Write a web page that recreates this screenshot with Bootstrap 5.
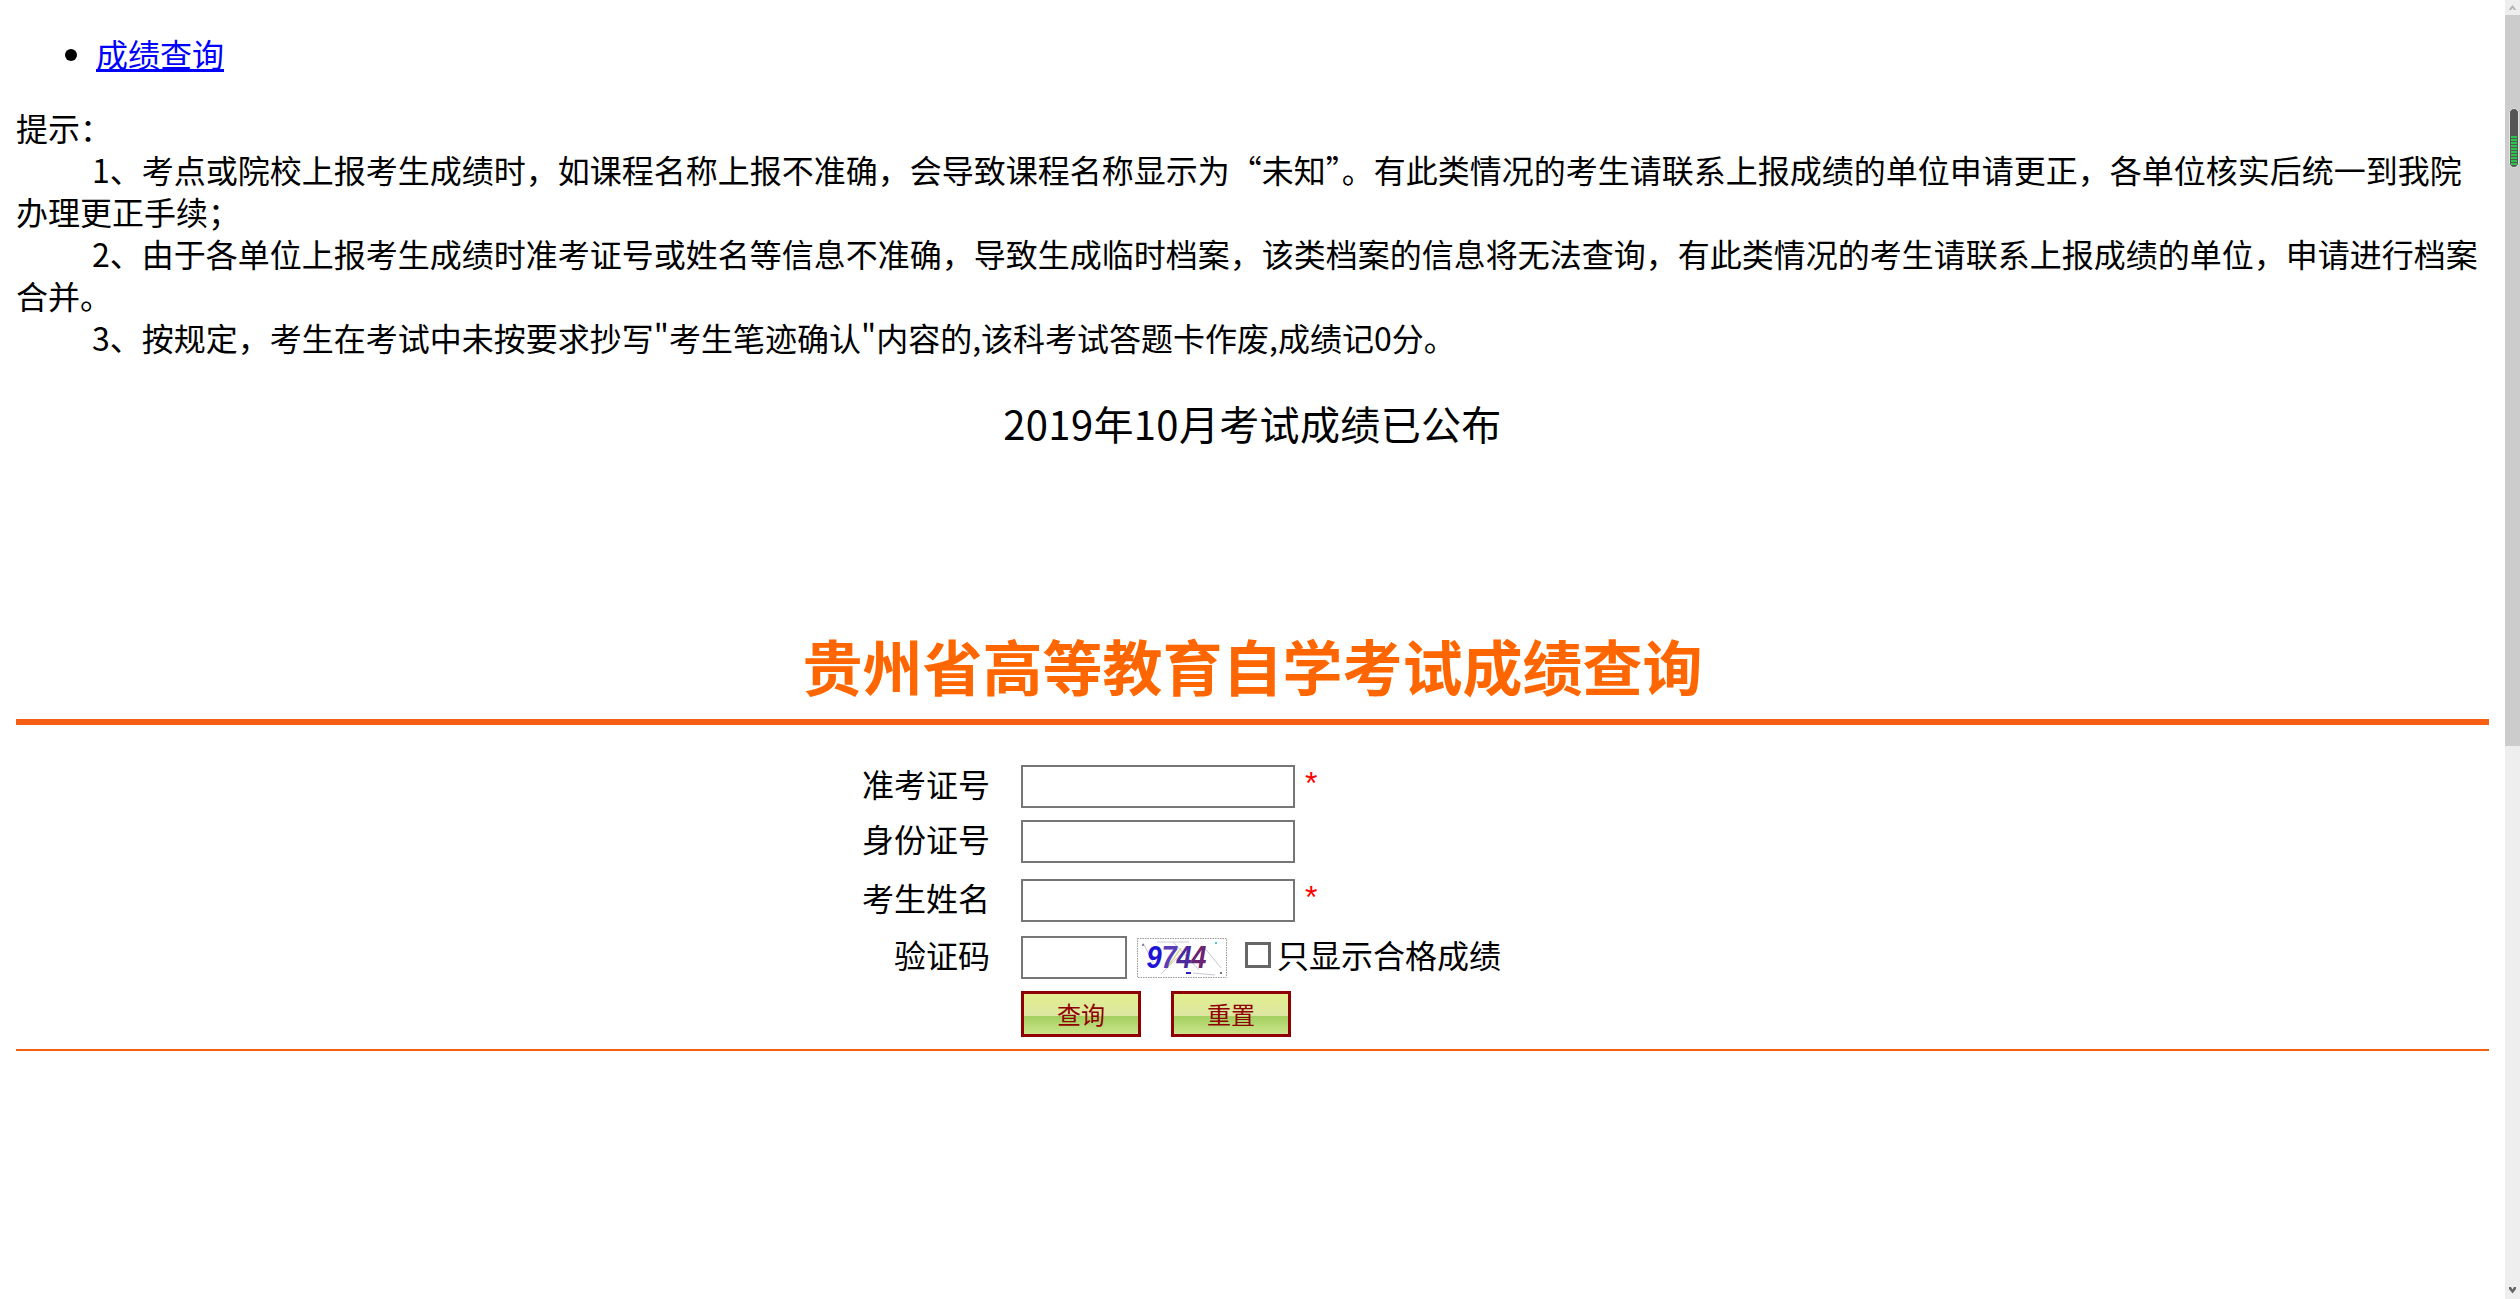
<!DOCTYPE html>
<html lang="zh-CN">
<head>
<meta charset="utf-8">
<title>成绩查询</title>
<link rel="stylesheet" href="https://cdn.jsdelivr.net/npm/bootstrap@5.3.0/dist/css/bootstrap.min.css">
<style>
html,body{height:100%;margin:0;overflow:hidden}
body{font-family:"Noto Sans CJK SC","Liberation Sans",sans-serif;font-size:32px;line-height:42px;color:#000;background:#fff}
.pagebox{padding:32px 16px 0;min-width:0}
.toplist{margin:0 0 32px;padding-left:80px}
.toplist a{color:#00f;text-decoration:underline}
.tips{margin:0}
.ind{display:inline-block;width:76px}
.notice{font-size:40px;line-height:54px;letter-spacing:.35px;text-align:center;margin:38px 0 0;font-weight:400}
.bigtitle{font-size:60px;line-height:80px;font-weight:700;color:#f60;text-align:center;margin:175px 0 0}
.rule-a{height:6px;background:#f65e14;border:0;opacity:1;margin:14px 0 40px}
.rule-b{height:2px;background:#f65e14;border:0;opacity:1;margin:12px 0 0}
.qrow{height:43px;margin-bottom:12px}
.qrow.gap-a{margin-bottom:16px}
.qrow.gap-b{margin-bottom:14px}
.qrow.btnline{height:46px;margin-bottom:0}
.flabel{width:974px;margin-right:31px;text-align:right;white-space:nowrap}
.uptext{padding-bottom:8px}
.txt{width:274px;height:43px;border:2px solid #767676;border-radius:0;background:#fff;padding:2px 4px;box-shadow:none}
.txt.short{width:106px}
.req{color:#f00;margin-left:10px;font-family:"Liberation Sans",sans-serif;font-size:32px;line-height:36px;height:36px;align-self:flex-start}
.capt{width:90px;height:40px;margin-left:10px;display:block}
.chk{appearance:none;-webkit-appearance:none;width:26px;height:26px;border:3px solid #666;background:#fff;margin:0 6px 6px 18px;border-radius:0}
.qbtn{width:120px;height:46px;padding:0;border:3px solid #900000;border-radius:0;color:#900000;font-size:24px;line-height:36px;background:linear-gradient(#e2ee8e 0,#dde6a2 55%,#a2cf5e 56%,#cde48c 100%)}
.qbtn:hover{color:#900000;border-color:#900000}
.btnpair{gap:30px}
.sbar{width:15px;height:1299px;background:#eee;flex:0 0 15px}
.sbtn{height:15px;display:block}
.strack{height:731px;background:#ccc;padding:93px 0 0 4px}
.sthumb{width:10px;height:60px;background:#555;border:1px solid #e4e4e4;border-radius:5px;padding:27px 1px 1px}
.sthumb i{display:block;height:29px;background:repeating-linear-gradient(#27c74a 0 2px,#555 2px 3px)}
.sfill{height:538px}
</style>
</head>
<body>
<div class="d-flex w-100 h-100">
  <main class="pagebox flex-grow-1">
    <ul class="toplist"><li><a href="#">成绩查询</a></li></ul>
    <p class="tips text-nowrap">提示：<br>
    <span class="ind"></span>1、考点或院校上报考生成绩时，如课程名称上报不准确，会导致课程名称显示为“未知”。有此类情况的考生请联系上报成绩的单位申请更正，各单位核实后统一到我院<br>办理更正手续；<br>
    <span class="ind"></span>2、由于各单位上报考生成绩时准考证号或姓名等信息不准确，导致生成临时档案，该类档案的信息将无法查询，有此类情况的考生请联系上报成绩的单位，申请进行档案<br>合并。<br>
    <span class="ind"></span>3、按规定，考生在考试中未按要求抄写"考生笔迹确认"内容的,该科考试答题卡作废,成绩记0分。</p>
    <h2 class="notice">2019年10月考试成绩已公布</h2>
    <h1 class="bigtitle">贵州省高等教育自学考试成绩查询</h1>
    <hr class="rule-a">
    <form>
      <div class="qrow d-flex align-items-center"><label class="flabel uptext">准考证号</label><input class="form-control txt" type="text"><span class="req">*</span></div>
      <div class="qrow gap-a d-flex align-items-center"><label class="flabel uptext">身份证号</label><input class="form-control txt" type="text"></div>
      <div class="qrow gap-b d-flex align-items-center"><label class="flabel uptext">考生姓名</label><input class="form-control txt" type="text"><span class="req">*</span></div>
      <div class="qrow d-flex align-items-center"><label class="flabel uptext">验证码</label><input class="form-control txt short" type="text">
        <svg class="capt" viewBox="0 0 90 40" role="img" aria-label="验证码图片">
          <rect x=".5" y=".5" width="89" height="39" fill="#fff" stroke="#999" stroke-dasharray="1.5 1"/>
          <path d="M6 5 L16 24 M24 36 L52 8 M36 4 L62 32 M56 35 L78 37 M20 4 H52 M66 8 L84 30" stroke="#c8c8d4" stroke-width="1" fill="none"/>
          <path d="M30 30 L44 10" stroke="#e4d88a" stroke-width="1.5" fill="none"/>
          <rect x="78" y="4" width="2" height="2" fill="#4cc"/><rect x="83" y="34" width="2" height="2" fill="#777"/><rect x="49" y="34" width="5" height="2" fill="#2a20c0"/><rect x="5" y="6" width="2" height="2" fill="#88a"/>
          <g transform="translate(9.5 0) scale(.88 1)">
            <text y="30" font-family="'Liberation Sans',sans-serif" font-size="31" font-weight="700" font-style="italic"><tspan x="0" fill="#1d14d6">9</tspan><tspan x="17" fill="#5a3cb8">7</tspan><tspan x="34" fill="#4a2a9c">4</tspan><tspan x="51" fill="#6a2470">4</tspan></text>
          </g>
        </svg>
        <input class="chk" type="checkbox" id="passonly"><label for="passonly" class="uptext">只显示合格成绩</label></div>
      <div class="qrow btnline d-flex align-items-center"><span class="flabel"></span><div class="d-flex btnpair"><button type="button" class="btn qbtn">查询</button><button type="reset" class="btn qbtn">重置</button></div></div>
    </form>
    <hr class="rule-b">
  </main>
  <aside class="sbar">
    <svg class="sbtn" width="15" height="15" viewBox="0 0 15 15"><path d="M4 9.5 7.5 5 11 9.5 11 10 9 10 7.5 8 6 10 4 10Z" fill="#b4b4b4"/></svg>
    <div class="strack"><div class="sthumb"><i></i></div></div>
    <div class="sfill"></div>
    <svg class="sbtn" width="15" height="15" viewBox="0 0 15 15"><path d="M4 3 6 3 7.5 5.5 9 3 11 3 11 5 7.5 9.5 4 5Z" fill="#666"/></svg>
  </aside>
</div>
<script src="https://cdn.jsdelivr.net/npm/bootstrap@5.3.0/dist/js/bootstrap.bundle.min.js"></script>
</body>
</html>
